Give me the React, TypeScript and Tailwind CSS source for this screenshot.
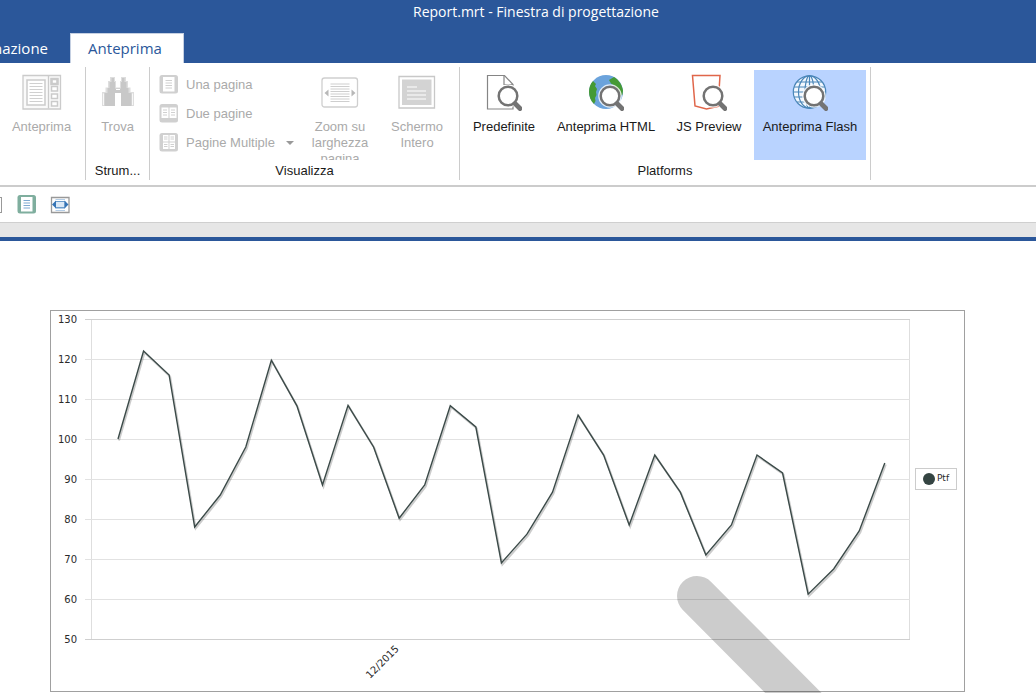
import type { ReactNode } from 'react'

const values = [
  100, 122, 116, 78, 86, 98, 119.7, 108.3, 88.5, 108.4, 98, 80.2, 88.5, 108.3, 103, 69, 76.2, 86.7, 106, 96, 78.5, 96,
  86.7, 71, 78.5, 96, 91.5, 61.2, 67.5, 77, 94,
]

const ticks = [130, 120, 110, 100, 90, 80, 70, 60, 50]

const yFor = (value: number) => 8 + (130 - value) * 4
const xFor = (index: number) => 67 + index * 25.56

function Lens() {
  return (
    <>
      <circle cx="22" cy="22" r="9.300" fill="none" stroke="#fff" strokeWidth="5" strokeOpacity="0.800" />
      <circle cx="22" cy="22" r="9.300" fill="#fff" stroke="#737373" strokeWidth="2.500" />
      <path d="M29 29.500l5 5" stroke="#737373" strokeWidth="4.800" strokeLinecap="round" />
    </>
  )
}

function PreviewIcon() {
  return (
    <svg width="40" height="36" viewBox="0 0 40 36" fill="none" stroke="#cbcbcb" aria-hidden="true">
      <path d="M1 1.500h37.500v33.500H1z" strokeWidth="1.300" fill="#fafafa" />
      <path d="M26.500 1.500v33" strokeWidth="1.300" />
      <path d="M5 6h18v25H5z" fill="#fff" strokeWidth="1.500" />
      <path d="M7.500 9.500h13M7.500 12.500h13M7.500 15.500h13M7.500 18.500h13M7.500 21.500h13M7.500 24.500h13M7.500 27.500h13" strokeWidth="0.900" />
      <path d="M29.500 5h6v5h-6zM29.500 12.500h6v4.500h-6zM29.500 20h6v4.500h-6zM29.500 27.500h6v4.500h-6z" fill="#fff" strokeWidth="1.500" />
      <path d="M29.500 5h6v5h-6z" strokeWidth="2.500" />
    </svg>
  )
}

function BinocularsIcon() {
  return (
    <svg width="36" height="36" viewBox="0 0 36 36" fill="none" aria-hidden="true">
      <path d="M10 3h5v4h1v6.500h4V7h1V3h5v4h2v6.500h2.500V18H34v14H21V19h-6v13H2V18h3.500v-4.500H8V7h2z" fill="#dedede" />
      <path d="M11.500 4H14v4h1v6.500h6V8h1V4h2.500v4h2v6h2v5h3v13H21V19h-6v13H4.500V19h3v-5h2V8h2z" fill="#c8c8c8" />
      <path d="M3.500 19.500V31M32.500 19.500V31" stroke="#f8f8f8" />
      <path d="M16 15.500h4" stroke="#fff" />
    </svg>
  )
}

function PageFrame({ children, color = '#d0d0d0' }: { children: ReactNode; color?: string }) {
  return (
    <svg width="20" height="20" viewBox="0 0 20 20" fill="none" aria-hidden="true">
      <rect x="0.500" y="0" width="18.500" height="18.500" rx="2.500" fill={color} />
      {children}
    </svg>
  )
}

function OnePageIcon({ color, lines = '#d0d0d0' }: { color?: string; lines?: string }) {
  return (
    <PageFrame color={color}>
      <path d="M4 2h11.500v14.500H4z" fill="#fff" />
      <path d="M6.500 5.500H13M6.500 8H13M6.500 10.500H13M6.500 13H13" stroke={lines} />
    </PageFrame>
  )
}

function TwoPageIcon() {
  return (
    <PageFrame>
      <path d="M2.500 3.500h7V14h-7zM10.500 3.500h7V14h-7z" fill="#fff" />
      <path d="M4 6h4M4 8.500h4M4 11h4M12 6h4M12 8.500h4M12 11h4" stroke="#d0d0d0" />
    </PageFrame>
  )
}

function MultiPageIcon() {
  return (
    <PageFrame>
      <path d="M4 2h5.500v6.500H4zM10.500 2H16v6.500h-5.500zM4 9.500h5.500V16H4zM10.500 9.500H16V16h-5.500z" fill="#fff" />
      <path d="M5 4h3.500M5 6h3.500M11.500 4H15M11.500 6H15M5 11.500h3.500M5 13.500h3.500M11.500 11.500H15M11.500 13.500H15" stroke="#d0d0d0" />
    </PageFrame>
  )
}

function ZoomWidthIcon() {
  return (
    <svg width="38" height="36" viewBox="0 0 38 36" fill="none" aria-hidden="true">
      <rect x="1" y="4" width="35.500" height="29" rx="2.500" stroke="#cfcfcf" strokeWidth="1.300" />
      <path d="M9.500 10h19M9.500 12.500h19M9.500 15h19M9.500 17.500h19M9.500 20h19M9.500 22.500h19M9.500 25h19M9.500 27.500h19" stroke="#c8c8c8" strokeWidth="0.900" />
      <path d="M7.500 15.500v7L3.500 19zM30.500 15.500v7l4-3.500z" fill="#b8b8b8" />
    </svg>
  )
}

function FullScreenIcon() {
  return (
    <svg width="38" height="36" viewBox="0 0 38 36" fill="none" aria-hidden="true">
      <path d="M1 2.500h35.500v31.500H1z" stroke="#c8c8c8" strokeWidth="1.300" />
      <path d="M4 5.500h29.500v25.500H4z" fill="#d3d3d3" />
      <path d="M9 13h10M9 17h19M9 21h19M9 25h19" stroke="#fff" strokeWidth="1.200" />
    </svg>
  )
}

function DefaultIcon() {
  return (
    <svg width="36" height="38" viewBox="0 0 36 38" fill="none" aria-hidden="true">
      <path d="M1.500 1.500h17l8.500 9v24.500H1.500z" fill="#fff" stroke="#858585" strokeWidth="1.200" />
      <path d="M18 2v8.500h9" stroke="#858585" strokeWidth="1.200" />
      <Lens />
    </svg>
  )
}

function EarthIcon() {
  return (
    <svg width="36" height="38" viewBox="0 0 36 38" fill="none" aria-hidden="true">
      <circle cx="18" cy="18" r="17" fill="#6ba3dc" />
      <path d="M5 7C2 10 1 14 1 18c0 4.500 1.800 9 5 12l1.500-3-.5-3 1.500-3-.5-3 1-3-2-3 1-2z" fill="#459a35" />
      <path d="M21 6l5-3c5 3 8 8 9 13.500l-.5 4-2.500 2-2-5-3-3-1-3-3-2z" fill="#459a35" />
      <Lens />
    </svg>
  )
}

function JsIcon() {
  return (
    <svg width="36" height="38" viewBox="0 0 36 38" fill="none" aria-hidden="true">
      <path d="M1.500 1.500H29l-2 31-11.500 2.500-11.500-3z" fill="#fff" stroke="#e0664a" strokeWidth="1.500" />
      <Lens />
    </svg>
  )
}

function FlashIcon() {
  return (
    <svg width="36" height="38" viewBox="0 0 36 38" fill="none" aria-hidden="true">
      <circle cx="17.500" cy="18" r="16.200" fill="#f3f8fe" />
      <g stroke="#4a86b8" strokeWidth="1.200">
        <circle cx="17.500" cy="18" r="16.200" />
        <ellipse cx="17.500" cy="18" rx="11" ry="16.200" />
        <ellipse cx="17.500" cy="18" rx="4.500" ry="16.200" />
        <path d="M17.500 2v32M1.500 18h32M5 8h25M2 13h31M2 23h31M5 28h25" />
      </g>
      <Lens />
    </svg>
  )
}

function FitWidthIcon() {
  return (
    <svg width="20" height="18" viewBox="0 0 20 18" fill="none" aria-hidden="true">
      <path d="M1.500 1.500H19v15H1.500z" fill="#fff" stroke="#999" strokeWidth="1.300" />
      <path d="M5.500 3.500H15M5.500 12.500H15M5.500 14.500H15" stroke="#b4cde6" strokeWidth="1.200" />
      <path d="M5.500 5.500H15v6H5.500z" fill="#dce9f6" stroke="#6d9dcc" strokeWidth="1" />
      <path d="M6 4.500v8L2 8.500zM14.500 4.500v8l4-4z" fill="#3674b5" />
    </svg>
  )
}

interface RibbonButtonProps {
  icon: ReactNode
  label: string
  width: string
  disabled?: boolean
  active?: boolean
}

function RibbonButton({ icon, label, width, disabled, active }: RibbonButtonProps) {
  return (
    <button
      type="button"
      disabled={disabled}
      className={`flex h-[90px] shrink-0 flex-col items-center overflow-hidden pt-1 ${width} ${disabled ? 'text-[#aaaaaa]' : 'text-[#1a1a1a]'} ${active ? 'bg-[#b9d3ff]' : ''}`}
    >
      <span className="flex h-[45px] shrink-0 items-start justify-center">{icon}</span>
      <span className="text-center leading-4">{label}</span>
    </button>
  )
}

function RibbonGroup({ label, className, children }: { label: string; className: string; children: ReactNode }) {
  return (
    <section className={`flex h-[113px] shrink-0 flex-col border-r border-[#cccccc] pt-0.5 ${className}`}>
      <div className="flex h-[94px] items-start pt-px">{children}</div>
      <h2 className="h-5 truncate text-center leading-5 text-[#1a1a1a]">{label}</h2>
    </section>
  )
}

const pageModes = [
  { label: 'Una pagina', icon: <OnePageIcon /> },
  { label: 'Due pagine', icon: <TwoPageIcon /> },
  { label: 'Pagine Multiple', icon: <MultiPageIcon />, menu: true },
]

function Ribbon() {
  return (
    <div className="flex h-[124px] items-start overflow-hidden border-b-2 border-[#cccccc] bg-white pt-1 font-['Liberation_Sans',sans-serif] text-[13px]">
      <RibbonGroup label="" className="w-[86px]">
        <RibbonButton icon={<PreviewIcon />} label="Anteprima" width="w-[83px]" disabled />
      </RibbonGroup>
      <RibbonGroup label="Strum..." className="w-16">
        <RibbonButton icon={<BinocularsIcon />} label="Trova" width="w-[63px]" disabled />
      </RibbonGroup>
      <RibbonGroup label="Visualizza" className="w-[310px]">
        <div className="flex w-[152px] shrink-0 flex-col pl-[9px]">
          {pageModes.map((mode) => (
            <button key={mode.label} type="button" disabled className="flex h-[29px] items-center gap-[7px] text-[#aaaaaa]">
              {mode.icon}
              <span className="whitespace-nowrap">{mode.label}</span>
              {mode.menu && <span className="ml-1 border-x-4 border-t-4 border-x-transparent border-t-[#999999]" />}
            </button>
          ))}
        </div>
        <RibbonButton icon={<ZoomWidthIcon />} label="Zoom su larghezza pagina" width="w-[76px]" disabled />
        <RibbonButton icon={<FullScreenIcon />} label="Schermo Intero" width="w-[78px]" disabled />
      </RibbonGroup>
      <RibbonGroup label="Platforms" className="w-[411px]">
        <RibbonButton icon={<DefaultIcon />} label="Predefinite" width="w-[88px]" />
        <RibbonButton icon={<EarthIcon />} label="Anteprima HTML" width="w-[116px]" />
        <RibbonButton icon={<JsIcon />} label="JS Preview" width="w-[90px]" />
        <RibbonButton icon={<FlashIcon />} label="Anteprima Flash" width="w-[112px]" active />
      </RibbonGroup>
    </div>
  )
}

function LineChart() {
  const points = values.map((value, i) => `${xFor(i)},${yFor(value)}`).join(' ')

  return (
    <svg
      viewBox="0 0 864 380"
      className="min-w-0 flex-1 font-['DejaVu_Sans',sans-serif] text-[10px]"
      role="img"
      aria-label="Ptf"
    >
      <path d="M40.500 8v320M858.500 8v320" stroke="#dedede" />
      {ticks.map((tick) => (
        <g key={tick}>
          <path d={`M34 ${yFor(tick) + 0.5}H859`} stroke={tick === 130 || tick === 50 ? '#cfcfcf' : '#e2e2e2'} />
          <text x="26" y={yFor(tick) + 4} textAnchor="end" fill="#2a2a2a">
            {tick}
          </text>
        </g>
      ))}
      <polyline points={points} transform="translate(1 1.500)" fill="none" stroke="#000" strokeOpacity="0.200" strokeWidth="2" />
      <polyline points={points} fill="none" stroke="#3b4a48" strokeWidth="1.400" />
      <text transform="translate(319 368) rotate(-45)" fill="#2a2a2a">
        12/2015
      </text>
    </svg>
  )
}

export default function App() {
  return (
    <div className="flex min-h-screen flex-col overflow-hidden bg-white">
      {/* Title bar and tabs */}
      <header className="bg-[#2b579a] font-['Open_Sans',sans-serif] text-white">
        <h1 className="h-[33px] pl-9 text-center text-sm leading-6">Report.mrt - Finestra di progettazione</h1>
        <nav className="flex h-[30px] text-[15px]">
          <button type="button" className="flex w-[70px] items-center justify-end overflow-hidden pr-[22px]">
            nazione
          </button>
          <button type="button" className="w-[114px] border border-b-0 border-[#c5d0e2] bg-white pr-1 text-[#2b579a]">
            Anteprima
          </button>
        </nav>
      </header>

      <Ribbon />

      {/* View toolbar */}
      <div className="flex h-9 items-center border-b border-[#cfcfcf] bg-white">
        <span className="h-4 w-0.5 border-y border-r border-[#999999]" />
        <button type="button" aria-label="Una pagina" className="ml-[15px]">
          <OnePageIcon color="#7fae9e" lines="#7fa9d1" />
        </button>
        <button type="button" aria-label="Larghezza pagina" className="ml-[13px]">
          <FitWidthIcon />
        </button>
      </div>
      <div className="h-3.5 bg-[#e6e6e6]" />

      {/* Report page */}
      <main className="relative flex-1 overflow-hidden border-t-4 border-[#2b579a] bg-white pt-[69px] pr-[71px] pl-[50px]">
        <figure className="flex items-start border border-[#a0a0a0]">
          <LineChart />
          <figcaption className="mt-[157px] mr-[7px] flex h-[22px] w-[42px] items-center justify-center gap-0.5 border border-[#cccccc] font-['DejaVu_Sans',sans-serif] text-[9px] text-[#2a2a2a]">
            <span className="size-3 rounded-full bg-[#344442]" />
            Ptf
          </figcaption>
        </figure>
        <svg className="pointer-events-none absolute top-[335px] left-[677px]" width="160" height="160" viewBox="0 0 160 160" aria-hidden="true">
          <path d="M20 20l160 161" stroke="#000" strokeOpacity="0.200" strokeWidth="40" strokeLinecap="round" />
        </svg>
      </main>
    </div>
  )
}
